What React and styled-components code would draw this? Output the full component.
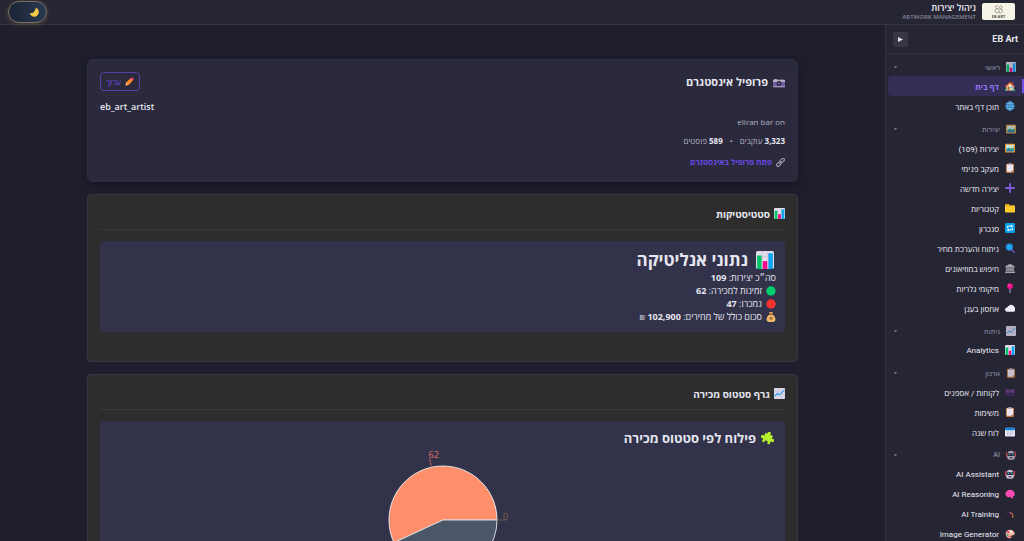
import React, { useState } from "react";
import styled, { createGlobalStyle } from "styled-components";

const GlobalStyle = createGlobalStyle`
  * {
    box-sizing: border-box;
  }

  body {
    margin: 0;
    background: #1f1e2d;
    color: #e6e6f0;
    font-family: "Open Sans", "Noto Sans", "Liberation Sans", sans-serif;
  }

  h1, h2, h3, p, ul {
    margin: 0;
    padding: 0;
  }

  button {
    font-family: inherit;
    cursor: pointer;
  }
`;

const Page = styled.div`
  direction: rtl;
  height: 100vh;
  display: flex;
  flex-direction: column;
  overflow: hidden;
`;

const TopBar = styled.header`
  flex: none;
  display: flex;
  align-items: center;
  justify-content: space-between;
  height: 25px;
  padding: 0 9px 1px 8px;
  background: #262534;
  border-bottom: 1px solid #343445;
`;

const Brand = styled.div`
  display: flex;
  align-items: center;
  gap: 6px;
`;

const LogoBox = styled.div`
  display: flex;
  width: 33px;
  height: 17px;
  border-radius: 2px;
  background: #f5f4e6;
`;

const BrandTitle = styled.div`
  font-size: 9px;
  line-height: 10px;
  font-weight: 600;
  color: #f0f0f6;
`;

const BrandSub = styled.div`
  direction: ltr;
  text-align: right;
  font-size: 6px;
  line-height: 8px;
  font-weight: 600;
  color: #85859c;
`;

const ThemeToggle = styled.button`
  display: flex;
  align-items: center;
  justify-content: ${({ $dark }) => ($dark ? "flex-start" : "flex-end")};
  width: 39px;
  height: 22px;
  padding: 0 7px;
  border: 1px solid #777264;
  border-radius: 11px;
  background: linear-gradient(90deg, #1b2435, #293850);
  box-shadow: 0 1px 5px rgba(200, 165, 60, 0.3);
`;

const Body = styled.div`
  flex: 1;
  min-height: 0;
  display: flex;
`;

const Sidebar = styled.aside`
  flex: none;
  width: 139px;
  background: #262534;
  border-left: 1px solid #323243;
  overflow-y: auto;
  scrollbar-width: none;
  font-family: Roboto, "Open Sans", sans-serif;
`;

const SidebarHead = styled.div`
  display: flex;
  align-items: center;
  justify-content: space-between;
  height: 29px;
  padding: 0 6px 0 7px;
  border-bottom: 1px solid #323243;
  font-size: 9px;
  font-weight: 700;
`;

const CollapseButton = styled.button`
  display: flex;
  align-items: center;
  justify-content: center;
  width: 15px;
  height: 15px;
  padding: 0;
  border: 0;
  border-radius: 3px;
  background: #373646;
`;

const Nav = styled.nav`
  padding-top: 4px;
`;

const NavSection = styled.section`
  margin-bottom: 4px;
`;

const SectionButton = styled.button`
  display: flex;
  align-items: center;
  gap: 6px;
  width: 100%;
  height: 18px;
  padding: 0 8px;
  border: 0;
  background: none;
  color: #7d7d94;
  font-size: 7px;
  font-weight: 600;
`;

const SectionLabel = styled.span`
  flex: 1;
  text-align: right;
`;

const Caret = styled.span`
  width: 3px;
  border: 1px solid transparent;
  border-top: 2px solid #6f6f85;
  border-bottom: 0;
`;

const NavLink = styled.a`
  display: flex;
  align-items: center;
  gap: 6px;
  height: 20px;
  margin-left: 2px;
  padding: 0 9px;
  border-radius: 4px;
  font-size: 8px;
  font-weight: ${({ $active }) => ($active ? 700 : 400)};
  text-decoration: none;
  color: ${({ $active }) => ($active ? "#9577f5" : "#ececf4")};
  background: ${({ $active }) =>
    $active
      ? "linear-gradient(#7350e8, #7350e8) right center / 2px 14px no-repeat, #342d56"
      : "none"};
`;

const Main = styled.main`
  flex: 1;
  min-width: 0;
  padding: 34px 87px;
  display: flex;
  flex-direction: column;
  gap: 12px;
  overflow-y: auto;
  scrollbar-width: none;
`;

const ProfileCard = styled.section`
  flex: none;
  padding: 12px 12px 13px;
  border: 1px solid #2e2e42;
  border-radius: 6px;
  background: #2a2a3c;
  box-shadow: 0 3px 10px rgba(0, 0, 0, 0.35);
`;

const ProfileHead = styled.div`
  display: flex;
  align-items: center;
  justify-content: space-between;
`;

const ProfileTitle = styled.h2`
  display: flex;
  align-items: center;
  gap: 5px;
  font-size: 11px;
  line-height: 18px;
  font-weight: 700;
`;

const EditButton = styled.button`
  display: flex;
  align-items: center;
  justify-content: center;
  gap: 4px;
  width: 40px;
  height: 19px;
  padding: 0;
  border: 1px solid #5540a8;
  border-radius: 4px;
  background: none;
  color: #6d4be0;
  font-size: 8px;
`;

const Handle = styled.p`
  direction: ltr;
  margin-top: 9px;
  text-align: left;
  font-size: 9px;
  line-height: 14px;
  font-weight: 600;
`;

const FullName = styled.p`
  margin-top: 2px;
  font-size: 8px;
  line-height: 12px;
  color: #b0b0c2;
`;

const Stats = styled.p`
  display: flex;
  gap: 7px;
  margin-top: 7px;
  font-size: 8px;
  line-height: 12px;
  color: #b0b0c2;

  strong {
    color: #e6e6f0;
  }
`;

const ProfileLink = styled.a`
  display: flex;
  align-items: center;
  gap: 4px;
  margin-top: 9px;
  font-size: 8px;
  line-height: 12px;
  font-weight: 700;
  text-decoration: none;
  color: #6b48e4;
`;

const Card = styled.section`
  flex: none;
  padding: 12px 12px 29px;
  border: 1px solid #363642;
  border-radius: 4px;
  background: #2d2d2d;
`;

const CardTitle = styled.h3`
  display: flex;
  align-items: center;
  gap: 4px;
  height: 23px;
  margin-bottom: 11px;
  padding-bottom: 9px;
  border-bottom: 1px solid #383842;
  font-size: 10px;
  font-weight: 700;
`;

const Panel = styled.div`
  padding: 8px 9px;
  border-radius: 4px;
  background: #32324a;
`;

const PanelTitle = styled.h2`
  display: flex;
  align-items: center;
  gap: ${({ $big }) => ($big ? "8px" : "5px")};
  font-size: ${({ $big }) => ($big ? "17px" : "13px")};
  line-height: ${({ $big }) => ($big ? "22px" : "18px")};
  padding-right: 2px;
  font-weight: 700;
`;

const Line = styled.p`
  display: flex;
  align-items: center;
  gap: 4px;
  font-size: 9px;
  line-height: 13px;

  small {
    font-size: 7px;
  }
`;

const Chart = styled.svg`
  display: block;
  margin: 0 auto;
  direction: ltr;

  text {
    font-size: 9px;
  }
`;

const drawings = {
  chart: (
    <>
      <rect width="16" height="16" rx="1.5" fill="#e2dcec" />
      <path d="M0 5h16M0 10h16M5.5 0v16M10.5 0v16" stroke="#c9bfd8" strokeWidth=".6" />
      <rect x="1" y="4" width="4" height="12" fill="#00c46a" />
      <rect x="6" y="9" width="4" height="7" fill="#f50a8a" />
      <rect x="11" y="2" width="4" height="14" fill="#08a5ee" />
    </>
  ),
  trend: (
    <>
      <rect width="16" height="16" rx="1.5" fill="#ddd6ea" />
      <path d="M0 5h16M0 10h16M5.5 0v16M10.5 0v16" stroke="#c3b7d6" strokeWidth=".6" />
      <path d="M1 12l4-4 3 2 7-7" fill="none" stroke="#2aa0e8" strokeWidth="1.6" />
    </>
  ),
  home: (
    <>
      <path d="M2 8l6-5 6 5v7H2z" fill="#f5dfae" />
      <path d="M0 9L8 1l8 8-1.500 1L8 4 1.500 10z" fill="#ef5a35" />
      <path d="M11 1h2v4l-2-2z" fill="#b5503d" />
      <rect x="4" y="9" width="3" height="6" fill="#a85c34" />
      <rect x="9" y="9" width="3" height="3" fill="#38a5e2" />
      <path d="M0 13h3v3H0zM12 13h4v3h-4z" fill="#32b566" />
    </>
  ),
  globe: (
    <>
      <circle cx="8" cy="8" r="7.500" fill="#2478b8" />
      <path
        d="M.5 8h15M8 .5v15M2 4h12M2 12h12M8 .5C3 4 3 12 8 15.500M8 .5c5 3.500 5 11.500 0 15"
        fill="none"
        stroke="#8fc7ec"
        strokeWidth=".9"
      />
    </>
  ),
  picture: (
    <>
      <rect y="1" width="16" height="14" rx="1" fill="#e89a3c" />
      <rect x="2" y="3" width="12" height="10" fill="#bfe6f5" />
      <path d="M2 10l4-3 3 2 5-2v6H2z" fill="#2f9b75" />
      <path d="M2 12l5-2 7 2v1H2z" fill="#2f79c4" />
      <circle cx="10" cy="5.500" r="1.500" fill="#ffd34a" />
    </>
  ),
  clipboard: (
    <>
      <rect x="1.500" y="1" width="13" height="15" rx="1.500" fill="#b9743c" />
      <path d="M3 2.500h10v8.500l-3 3H3z" fill="#f1ecf7" />
      <path d="M10 14v-3h3z" fill="#c8bdd6" />
      <rect x="5.500" y="0" width="5" height="2.500" rx="1" fill="#9c94aa" />
      <path d="M5 6h6M5 8.500h6M5 11h3" stroke="#d3cae0" strokeWidth=".7" />
    </>
  ),
  plus: <path d="M8 1.500v13M1.500 8h13" stroke="#8058d8" strokeWidth="3" strokeLinecap="round" />,
  folder: (
    <>
      <path d="M0 3q0-1.500 1.500-1.500H6l2 2h6.500Q16 3.500 16 5v9H0z" fill="#e9a916" />
      <rect y="5" width="16" height="10" rx="1" fill="#ffcb2e" />
    </>
  ),
  sync: (
    <>
      <rect width="16" height="16" rx="2" fill="#0a9fe6" />
      <path d="M4 8V5h7M12 8v3H5" fill="none" stroke="#fff" strokeWidth="1.500" />
      <path d="M10 2.500L13 5l-3 2.500zM6 8.500L3 11l3 2.500z" fill="#fff" />
    </>
  ),
  search: (
    <>
      <path d="M10.500 10.500l4 4" stroke="#6a4a9c" strokeWidth="3" strokeLinecap="round" />
      <circle cx="7" cy="6.500" r="5.500" fill="#20a7f2" stroke="#2b6eb5" strokeWidth="1.500" />
    </>
  ),
  museum: (
    <>
      <path d="M8 1l7.500 4v2H.5V5zM0 13.500h16V16H0z" fill="#a5a2a8" />
      <path d="M1.500 7h13v7h-13z" fill="#65626c" />
      <path d="M3 7v6M6.300 7v6M9.700 7v6M13 7v6" stroke="#a5a2a8" strokeWidth="1.800" />
    </>
  ),
  pin: (
    <>
      <path d="M8 8v8" stroke="#b7a9c8" strokeWidth="1.500" />
      <circle cx="8" cy="5" r="4.500" fill="#ef108b" />
      <circle cx="6.500" cy="3.500" r="1.200" fill="#ff87c5" />
    </>
  ),
  cloud: (
    <path
      d="M3.500 14a3.500 3.500 0 010-7 4 4 0 013-2.500 5 5 0 018.500 2 4 4 0 01-1.500 7.500z"
      fill="#f3ecfa"
    />
  ),
  people: (
    <>
      <circle cx="4.200" cy="6.500" r="3.500" fill="#5c3a7c" />
      <circle cx="11.800" cy="6.500" r="3.500" fill="#5c3a7c" />
      <path d="M0 14q0-4 4-4 3 0 4 1 1-1 4-1 4 0 4 4z" fill="#43245e" />
    </>
  ),
  calendar: (
    <>
      <rect y="1" width="16" height="14" rx="2" fill="#ece7f6" />
      <path d="M0 5V3q0-2 2-2h12q2 0 2 2v2z" fill="#1085d8" />
      <path d="M3 8h10M3 10.500h10M3 13h7" stroke="#9aa2c9" strokeWidth="1.200" strokeDasharray="1.600 1.200" />
    </>
  ),
  robot: (
    <>
      <path d="M3 5q0-4 5-4t5 4z" fill="#c8c2d0" />
      <rect x="0" y="3" width="1.800" height="8" fill="#e84350" />
      <rect x="14.200" y="3" width="1.800" height="8" fill="#e84350" />
      <rect x="2" y="4" width="12" height="11.500" rx="4" fill="#cfc8d8" />
      <rect x="2" y="5" width="12" height="4.500" rx="2" fill="#2c2338" />
      <circle cx="5.500" cy="7.200" r="1.200" fill="#35c8f2" />
      <circle cx="10.500" cy="7.200" r="1.200" fill="#35c8f2" />
      <path d="M5.500 12.500h5" stroke="#3b3048" strokeWidth="1.800" />
    </>
  ),
  brain: (
    <>
      <path
        d="M2 11Q-1 7 2.500 4 5 0 10 1.500q5 1 5.500 6 .5 4-3 4.500v3l-3-.5-1-2q-4 2-6.500-1.500z"
        fill="#ff4db8"
      />
      <path d="M4 5q3 0 3 3M9 3q0 3 4 3M5 10q3-1 6 0" fill="none" stroke="#e0389f" strokeWidth=".7" />
    </>
  ),
  cap: (
    <>
      <path d="M1 6l7-3 7 5-4 1z" fill="#432a55" />
      <path d="M4 8l7 1v4q-5 1-7-3z" fill="#382347" />
      <path d="M8 5.500l4.500 3v6" fill="none" stroke="#e88c2d" strokeWidth="1.500" />
    </>
  ),
  palette: (
    <>
      <path d="M8 1a7 7 0 100 14q3 0 2-3 0-2 3-2 3 0 2.500-3Q14 1 8 1z" fill="#f3b5a2" />
      <circle cx="5" cy="5" r="1.700" fill="#e23c62" />
      <circle cx="10" cy="4.500" r="1.700" fill="#fff" />
      <circle cx="4" cy="9.500" r="1.600" fill="#2faa72" />
      <circle cx="7.500" cy="12" r="1.500" fill="#d93e4e" />
    </>
  ),
  camera: (
    <>
      <rect y="5" width="16" height="10" rx="1" fill="#6c5a9c" />
      <path d="M0 6q0-1 1-1h1V4h3v1h10q1 0 1 1v2H0z" fill="#b6b0c0" />
      <path d="M0 13.500h16V15H0z" fill="#a79fb5" />
      <circle cx="8" cy="10" r="3.200" fill="#2d2240" />
      <circle cx="8" cy="10" r="1.300" fill="#8a7ab8" />
    </>
  ),
  link: (
    <g fill="none" stroke="#9a96a5" strokeWidth="2">
      <rect x="6.500" y="2" width="9" height="5" rx="2.500" transform="rotate(-45 11 4.500)" />
      <rect x=".5" y="8.500" width="9" height="5" rx="2.500" transform="rotate(-45 5 11)" />
      <path d="M6 10l4-4" />
    </g>
  ),
  pencil: (
    <>
      <path d="M1 15l1-5.500 8-7.500 4 4-7.500 8z" fill="#ff8a2b" />
      <path d="M9.500 2.500L11.500 1q2-.8 3 .5T15.200 4.500L13.500 6.500z" fill="#e8457c" />
      <path d="M1 15l1-4L5 14z" fill="#f4cf9c" />
    </>
  ),
  green: <circle cx="8" cy="8" r="7.500" fill="#00cf6b" />,
  red: <circle cx="8" cy="8" r="7.500" fill="#f8312f" />,
  money: (
    <>
      <path d="M5 4h6q5 5 4 9-1 3-7 3t-7-3q-1-4 4-9z" fill="#efb96c" />
      <path d="M5 0h6l-1 3H6z" fill="#e2a354" />
      <path d="M5 3.700h6" stroke="#8b5b35" strokeWidth="1.500" />
      <circle cx="8" cy="10" r="2.500" fill="#a86c35" />
    </>
  ),
  puzzle: (
    <path
      transform="rotate(22 8 8)"
      d="M3 2.500h2.800q-1.300-3 1.700-3t1.700 3H13v3.800q3.500-1.300 3.500 1.700T13 9.700V14H9.800q1-3-1.800-3t-2 3H3v-4.300q-3.500 1.300-3.500-1.700T3 6.300z"
      fill="#b6f02c"
    />
  ),
  moon: <path d="M11 1a7.500 7.500 0 11-10 9Q9 11 11 1z" fill="#f3cb44" />,
};

const IconSvg = styled.svg`
  flex: none;
  width: ${({ $size }) => $size}px;
  height: ${({ $size }) => $size}px;
  opacity: ${({ $dim }) => ($dim ? 0.8 : 1)};
`;

const Icon = ({ name, size = 10, dim }) => (
  <IconSvg viewBox="0 0 16 16" $size={size} $dim={dim} aria-hidden="true">
    {drawings[name]}
  </IconSvg>
);

const menu = [
  {
    title: "ראשי",
    icon: "chart",
    items: [
      ["דף בית", "home"],
      ["תוכן דף באתר", "globe"],
    ],
  },
  {
    title: "יצירות",
    icon: "picture",
    items: [
      ["יצירות (109)", "picture"],
      ["מעקב פנימי", "clipboard"],
      ["יצירה חדשה", "plus"],
      ["קטגוריות", "folder"],
      ["סנכרון", "sync"],
      ["ניתוח והערכת מחיר", "search"],
      ["חיפוש במוזיאונים", "museum"],
      ["מיקומי גלריות", "pin"],
      ["אחסון בענן", "cloud"],
    ],
  },
  { title: "ניתוח", icon: "trend", items: [["Analytics", "chart"]] },
  {
    title: "ארגון",
    icon: "clipboard",
    items: [
      ["לקוחות / אספנים", "people"],
      ["משימות", "clipboard"],
      ["לוח שנה", "calendar"],
    ],
  },
  {
    title: "AI",
    icon: "robot",
    items: [
      ["AI Assistant", "robot"],
      ["AI Reasoning", "brain"],
      ["AI Training", "cap"],
      ["Image Generator", "palette"],
    ],
  },
];

const Logo = () => (
  <svg width="33" height="17" viewBox="0 0 33 17" role="img" aria-label="EB Art">
    <g fill="none" stroke="#8d8175" strokeWidth=".7">
      <path d="M16 2.500q-3 0-2.500 2 .5 1.500 2.500 1-3.500 0-3 2.500.5 2.500 3.500 1.500" />
      <path d="M17 10V4q2-2.500 3-.5.500 2-2 2.500 3 0 2.500 2.500Q19 11 17 9.500" />
    </g>
    <text x="16.500" y="14.500" fontSize="4" fontWeight="700" fill="#5b554e" textAnchor="middle">
      EB ART
    </text>
  </svg>
);

// פרוסות העוגה מתחילות בצד ימין ומתקדמות נגד כיוון השעון
const SalesPie = ({ available, sold }) => {
  const r = 54;
  const cx = 120;
  const cy = 73;
  const angle = (available / (available + sold)) * Math.PI * 2;
  const point = (a, d) => [cx + d * Math.cos(a), cy - d * Math.sin(a)];
  const [ex, ey] = point(angle, r);
  const [lx, ly] = point(angle / 2, r);
  const [tx, ty] = point(angle / 2, r + 9);

  return (
    <Chart width="240" height="146" viewBox="0 0 240 146">
      <path
        d={`M${cx} ${cy}L${cx + r} ${cy}A${r} ${r} 0 1 0 ${ex} ${ey}Z`}
        fill="#ff8f6b"
        stroke="#e8e4e4"
      />
      <path
        d={`M${cx} ${cy}L${ex} ${ey}A${r} ${r} 0 0 0 ${cx + r} ${cy}Z`}
        fill="#4b5768"
        stroke="#d5d8dc"
      />
      <path d={`M${lx} ${ly}L${tx} ${ty}`} stroke="#b5605a" />
      <path d={`M${cx + r} ${cy}h9`} stroke="#69554f" />
      <text x={tx - 1} y={ty} fill="#e6735f">
        {available}
      </text>
      <text x={cx + r + 6} y={cy} fill="#7d6150">
        0
      </text>
    </Chart>
  );
};

function App() {
  const [dark, setDark] = useState(true);
  const [closed, setClosed] = useState({});

  const toggleSection = (title) => {
    setClosed((prev) => ({ ...prev, [title]: !prev[title] }));
  };

  return (
    <>
      <GlobalStyle />
      <Page lang="he">
        <TopBar>
          <Brand>
            <LogoBox>
              <Logo />
            </LogoBox>
            <div>
              <BrandTitle>ניהול יצירות</BrandTitle>
              <BrandSub>ARTWORK MANAGEMENT</BrandSub>
            </div>
          </Brand>
          <ThemeToggle
            type="button"
            role="switch"
            aria-checked={dark}
            aria-label="מצב כהה"
            $dark={dark}
            onClick={() => setDark(!dark)}
          >
            <Icon name="moon" />
          </ThemeToggle>
        </TopBar>

        <Body>
          <Sidebar>
            <SidebarHead>
              <span>EB Art</span>
              <CollapseButton type="button" aria-label="כווץ תפריט">
                <svg width="5" height="5" viewBox="0 0 5 5">
                  <path d="M0 0l5 2.500-5 2.500z" fill="#dedee8" />
                </svg>
              </CollapseButton>
            </SidebarHead>
            <Nav>
              {menu.map((section) => (
                <NavSection key={section.title}>
                  <SectionButton
                    type="button"
                    aria-expanded={!closed[section.title]}
                    onClick={() => toggleSection(section.title)}
                  >
                    <Icon name={section.icon} dim />
                    <SectionLabel>{section.title}</SectionLabel>
                    <Caret />
                  </SectionButton>
                  {!closed[section.title] &&
                    section.items.map(([label, icon]) => (
                      <NavLink key={label} href="#" $active={label === "דף בית"}>
                        <Icon name={icon} />
                        {label}
                      </NavLink>
                    ))}
                </NavSection>
              ))}
            </Nav>
          </Sidebar>

          <Main>
            {/* פרופיל */}
            <ProfileCard>
              <ProfileHead>
                <ProfileTitle>
                  <Icon name="camera" size={12} />
                  פרופיל אינסטגרם
                </ProfileTitle>
                <EditButton type="button">
                  <Icon name="pencil" size={9} />
                  ערוך
                </EditButton>
              </ProfileHead>
              <Handle>eb_art_artist</Handle>
              <FullName>eliran bar on</FullName>
              <Stats>
                <span>
                  <strong>3,323</strong> עוקבים
                </span>
                <span>•</span>
                <span>
                  <strong>589</strong> פוסטים
                </span>
              </Stats>
              <ProfileLink href="#">
                <Icon name="link" size={9} />
                פתח פרופיל באינסטגרם
              </ProfileLink>
            </ProfileCard>

            {/* סטטיסטיקות */}
            <Card>
              <CardTitle>
                <Icon name="chart" size={11} />
                סטטיסטיקות
              </CardTitle>
              <Panel>
                <PanelTitle $big>
                  <Icon name="chart" size={18} />
                  נתוני אנליטיקה
                </PanelTitle>
                <Line>
                  <span>
                    סה״כ יצירות: <strong>109</strong>
                  </span>
                </Line>
                <Line>
                  <Icon name="green" />
                  <span>
                    זמינות למכירה: <strong>62</strong>
                  </span>
                </Line>
                <Line>
                  <Icon name="red" />
                  <span>
                    נמכרו: <strong>47</strong>
                  </span>
                </Line>
                <Line>
                  <Icon name="money" />
                  <span>
                    סכום כולל של מחירים: <strong>102,900</strong> <small>₪</small>
                  </span>
                </Line>
              </Panel>
            </Card>

            {/* גרף */}
            <Card>
              <CardTitle>
                <Icon name="trend" size={11} />
                גרף סטטוס מכירה
              </CardTitle>
              <Panel>
                <PanelTitle>
                  <Icon name="puzzle" size={13} />
                  פילוח לפי סטטוס מכירה
                </PanelTitle>
                <SalesPie available={62} sold={47} />
              </Panel>
            </Card>
          </Main>
        </Body>
      </Page>
    </>
  );
}

export default App;
